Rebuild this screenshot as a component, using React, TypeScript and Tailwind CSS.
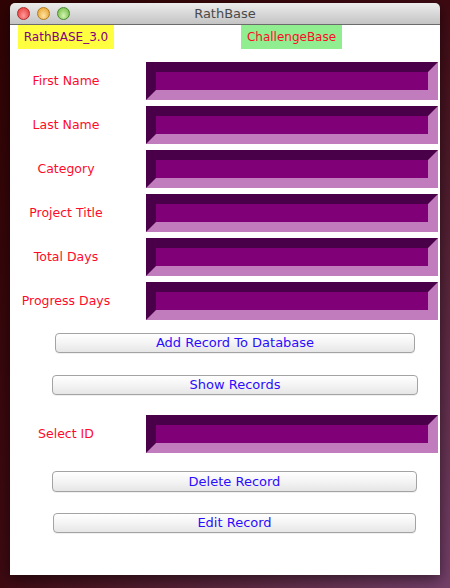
import React from "react"

const fields = ["First Name", "Last Name", "Category", "Project Title", "Total Days", "Progress Days"]

// beveled text field, borders make the diagonal joins
const Bevel = () => (
  <div className="box-border h-[38px] w-[292px] border-[10px] border-t-[#4a0048] border-l-[#4a0048] border-b-[#c07cbc] border-r-[#c07cbc] bg-[#800078]" />
)

const Row = ({ label }: { label: string }) => (
  <div className="flex items-center">
    <div className="w-[112px] text-center text-[12.5px] text-[#ff0a28]">{label}</div>
    <div className="ml-[24px]">
      <Bevel />
    </div>
  </div>
)

const AquaButton = ({ label, className }: { label: string; className: string }) => (
  <div
    className={`flex h-[20px] items-center justify-center rounded-[4px] border border-[#a3a3a3] bg-linear-to-b from-[#ffffff] via-[#f4f4f4] to-[#e6e6e6] text-[13px] text-[#2c0cff] shadow-[0_1px_0_rgba(0,0,0,0.06)] ${className}`}
  >
    {label}
  </div>
)

export default function App() {
  return (
    <div
      className="h-[588px] w-[450px] overflow-hidden bg-linear-to-br from-[#300404] via-[#3e0a12] to-[#74406a] px-[10px] pt-[3px]"
      style={{ fontFamily: '"DejaVu Sans", "Liberation Sans", sans-serif' }}
    >
      <div className="w-[430px] overflow-hidden rounded-t-[5px] shadow-[0_4px_14px_rgba(0,0,0,0.5)]">
        {/* title bar */}
        <div className="relative flex h-[22px] items-center justify-center border-b border-[#6b6b6b] bg-linear-to-b from-[#ececec] to-[#c4c4c4]">
          <div className="absolute left-[7px] top-[4px] flex gap-[7px]">
            <span className="h-[13px] w-[13px] rounded-full border border-[#b02a2a] bg-radial-[at_50%_70%] from-[#ff9a9a] to-[#e0302e]" />
            <span className="h-[13px] w-[13px] rounded-full border border-[#b07a20] bg-radial-[at_50%_70%] from-[#ffe2a0] to-[#e39a20]" />
            <span className="h-[13px] w-[13px] rounded-full border border-[#4a8a30] bg-radial-[at_50%_70%] from-[#d4f4b0] to-[#64b43a]" />
          </div>
          <span className="text-[13px] text-[#4a4a4a]">RathBase</span>
        </div>

        {/* content */}
        <div className="h-[550px] bg-white">
          <div className="flex">
            <div className="ml-[8px] flex h-[24px] w-[96px] items-center justify-center bg-[#ffff40] text-[12px] text-[#800080]">
              RathBASE_3.0
            </div>
            <div className="ml-[127px] flex h-[24px] w-[101px] items-center justify-center bg-[#90ee90] text-[12px] text-[#ff0a28]">
              ChallengeBase
            </div>
          </div>

          <div className="mt-[13px] flex flex-col gap-[6px]">
            {fields.map((f) => (
              <Row key={f} label={f} />
            ))}
          </div>

          <AquaButton label="Add Record To Database" className="mt-[13px] ml-[45px] w-[360px]" />
          <AquaButton label="Show Records" className="mt-[22px] ml-[42px] w-[366px]" />

          <div className="mt-[20px]">
            <Row label="Select ID" />
          </div>

          <AquaButton label="Delete Record" className="mt-[18px] ml-[42px] w-[365px] h-[21px]" />
          <AquaButton label="Edit Record" className="mt-[21px] ml-[43px] w-[363px]" />
        </div>
      </div>
    </div>
  )
}
